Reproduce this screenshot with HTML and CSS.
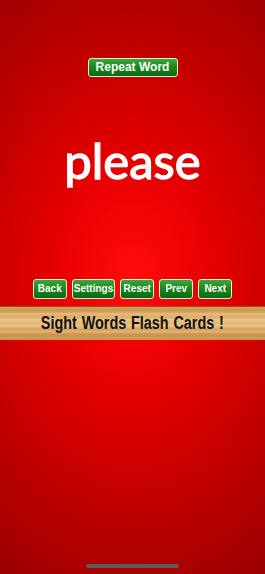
FILE: index.html
```html
<!DOCTYPE html>
<html lang="en">
<head>
    <meta charset="UTF-8">
    <title>Sight Words Flash Cards</title>
    <link rel="stylesheet" href="styles.css">
</head>
<body>
<div class="screen">
    <button class="btn btn-repeat">Repeat Word</button>

    <div class="word">please</div>

    <div class="controls">
        <button class="btn">Back</button>
        <button class="btn">Settings</button>
        <button class="btn">Reset</button>
        <button class="btn">Prev</button>
        <button class="btn">Next</button>
    </div>

    <div class="banner"><span class="banner-title">Sight Words Flash Cards !</span></div>

    <div class="home-bar"></div>
</div>
</body>
</html>
```

FILE: styles.css
```css
html, body { margin: 0; padding: 0; }
body { width: 265px; height: 574px; overflow: hidden; font-family: "Liberation Sans", Arial, sans-serif; }
.screen {
    height: 574px;
    display: flex;
    flex-direction: column;
    align-items: center;
    background: radial-gradient(ellipse 95% 62% at 50% 48%, #ff0c0c 0%, #e80000 30%, #bb0000 70%, #9a0000 100%);
}
.btn {
    box-sizing: border-box;
    height: 20px;
    min-width: 34px;
    padding: 0 1px;
    border: 1px solid #e9efd4;
    border-radius: 3px;
    background: linear-gradient(#3aa83a, #1a861e 50%, #0a6a10);
    color: #fff;
    font-family: "Liberation Sans", Arial, sans-serif;
    font-weight: bold;
    font-size: 10px;
    line-height: 18px;
    text-align: center;
    cursor: pointer;
}
.btn-repeat { margin-top: 58px; height: 19px; width: 90px; font-size: 12px; line-height: 17px; }
.word {
    margin-top: 53px;
    height: 60px;
    line-height: 60px;
    color: #fff;
    font-family: Lato, "Noto Sans", sans-serif;
    font-weight: normal;
    font-size: 49px;
    -webkit-text-stroke: 1.3px #fff;
}
.controls { margin-top: 89px; display: flex; gap: 5px; }
.banner {
    box-sizing: border-box;
    margin-top: 7px;
    width: 100%;
    height: 34px;
    border-top: 1px solid #8a5520;
    border-bottom: 1px solid #c89858;
    background:
        repeating-linear-gradient(180deg, rgba(255,235,180,0.25) 0px, rgba(255,235,180,0) 2px, rgba(150,90,30,0.12) 4px, rgba(255,235,180,0) 6px),
        linear-gradient(#c98d48, #e3b572 25%, #ecc487 50%, #d9a45e 80%, #c48a45);
    text-align: center;
}
.banner-title {
    display: inline-block;
    transform: scaleX(0.8);
    color: #111;
    font-family: "Liberation Sans", Arial, sans-serif;
    font-weight: bold;
    font-size: 18px;
    word-spacing: 1px;
    line-height: 32px;
    white-space: nowrap;
}
.home-bar {
    margin-top: auto;
    margin-bottom: 6px;
    width: 93px;
    height: 4px;
    border-radius: 2px;
    background: #5c5c5c;
}
```
